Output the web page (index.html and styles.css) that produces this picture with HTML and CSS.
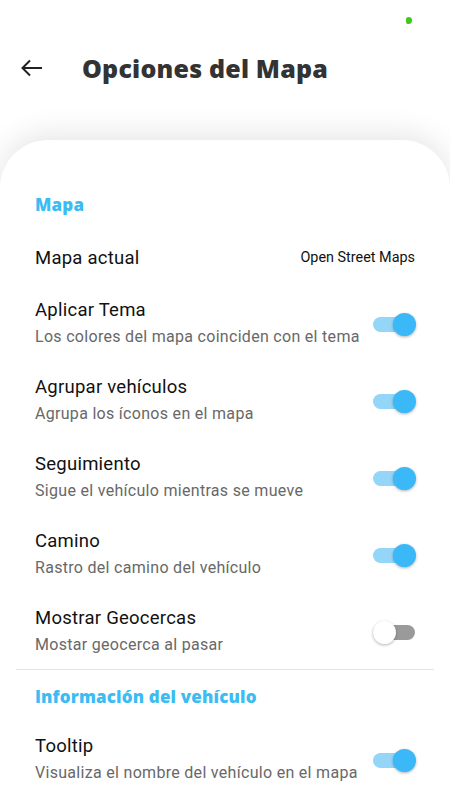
FILE: index.html
```html
<!DOCTYPE html>
<html lang="es">
<head>
<meta charset="utf-8">
<title>Opciones del Mapa</title>
<link rel="stylesheet" href="styles.css">
</head>
<body>
<div class="screen">
  <div class="status"><span class="dot"></span></div>
  <header class="header">
    <svg class="back" width="24" height="18" viewBox="0 0 24 18"><path d="M22 9H3M10 1.5 2.5 9 10 16.5" fill="none" stroke="#222" stroke-width="2"/></svg>
    <h1 class="title">Opciones del Mapa</h1>
  </header>
  <main class="card">
    <h2 class="section">Mapa</h2>
    <div class="row-simple">
      <span class="row-title">Mapa actual</span>
      <span class="value">Open Street Maps</span>
    </div>
    <div class="row">
      <div class="texts"><div class="row-title">Aplicar Tema</div><div class="row-sub">Los colores del mapa coinciden con el tema</div></div>
      <span class="switch on"><span class="thumb"></span></span>
    </div>
    <div class="row">
      <div class="texts"><div class="row-title">Agrupar vehículos</div><div class="row-sub">Agrupa los íconos en el mapa</div></div>
      <span class="switch on"><span class="thumb"></span></span>
    </div>
    <div class="row">
      <div class="texts"><div class="row-title">Seguimiento</div><div class="row-sub">Sigue el vehículo mientras se mueve</div></div>
      <span class="switch on"><span class="thumb"></span></span>
    </div>
    <div class="row">
      <div class="texts"><div class="row-title">Camino</div><div class="row-sub">Rastro del camino del vehículo</div></div>
      <span class="switch on"><span class="thumb"></span></span>
    </div>
    <div class="row">
      <div class="texts"><div class="row-title">Mostrar Geocercas</div><div class="row-sub">Mostar geocerca al pasar</div></div>
      <span class="switch off"><span class="thumb"></span></span>
    </div>
    <hr class="divider">
    <h2 class="section second">Información del vehículo</h2>
    <div class="row">
      <div class="texts"><div class="row-title">Tooltip</div><div class="row-sub">Visualiza el nombre del vehículo en el mapa</div></div>
      <span class="switch on"><span class="thumb"></span></span>
    </div>
  </main>
</div>
</body>
</html>
```
FILE: styles.css
```css
* { box-sizing: border-box; }
html, body { margin: 0; padding: 0; background: #fff; }
body { font-family: Roboto, "Liberation Sans", sans-serif; color: #1a1a1a; }
.screen { width: 450px; height: 800px; overflow: hidden; background: #fff; }
.status { height: 40px; display: flex; justify-content: flex-end; align-items: center; padding-right: 38px; }
.dot { width: 6px; height: 7px; background: #3fc81e; border-radius: 3px 4px 4px 3px; margin-bottom: -1px; }
.header { height: 56px; display: flex; align-items: center; padding-left: 20px; }
.back { display: block; margin-right: 38px; }
.title { margin: 0; font-family: "Open Sans", sans-serif; font-weight: 800; font-size: 25px; color: #333; letter-spacing: 0.2px; }
.card { margin-top: 44px; border-radius: 48px 48px 0 0; box-shadow: 0 -6px 30px rgba(0,0,0,0.10); background: #fff; padding: 51px 35px 0; min-height: 700px; }
.section { margin: 0 0 11px; font-family: "Open Sans", sans-serif; font-weight: 800; font-size: 17px; line-height: 28px; color: #3bbcf2; letter-spacing: 0.15px; }
.section.second { margin-bottom: 10px; }
.row-simple { height: 55px; display: flex; justify-content: space-between; align-items: center; }
.value { font-size: 14.4px; color: #111; }
.row { height: 77px; display: flex; align-items: center; justify-content: space-between; padding: 12px 0 11px; }
.row-title { font-size: 18.5px; line-height: 26px; color: #111; letter-spacing: 0.25px; }
.row-sub { font-size: 16px; line-height: 28px; color: #686868; letter-spacing: 0.3px; }
.switch { position: relative; width: 42px; height: 15px; border-radius: 8px; flex: none; }
.switch.on { background: #93d6f8; }
.switch.off { background: #9a9a9a; }
.thumb { position: absolute; top: -4px; width: 23px; height: 23px; border-radius: 50%; box-shadow: 0 1px 3px rgba(0,0,0,0.3); }
.switch.on .thumb { right: -1px; background: #3ab8f7; }
.switch.off .thumb { left: 0; background: #fff; }
.divider { border: 0; border-top: 1px solid #e4e4e4; margin: -1px -19px 13px; }
```
